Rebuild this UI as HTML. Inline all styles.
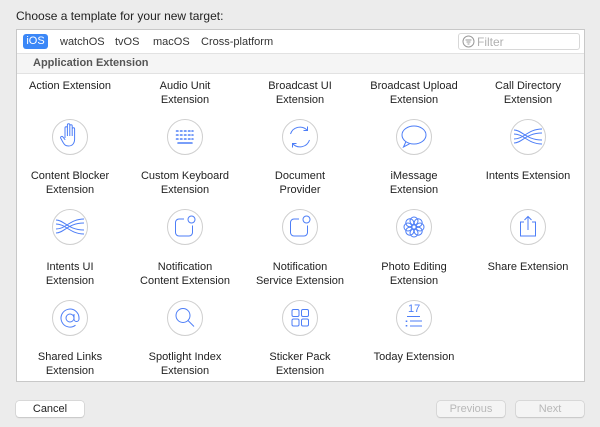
<!DOCTYPE html>
<html><head><meta charset="utf-8"><style>
*{margin:0;padding:0;box-sizing:border-box}
body{width:600px;height:427px;background:#ececec;font-family:"Liberation Sans",sans-serif;font-size:11px;color:#222;position:relative;overflow:hidden}
.a{position:absolute}
.box{left:16px;top:29px;width:569px;height:353px;background:#fff;border:1px solid #c8c8c8}
.lbl{position:absolute;width:114px;text-align:center;line-height:14px;font-size:11px;color:#222}
.btn{position:absolute;top:401px;height:16px;width:68px;background:#fff;border-radius:3px;box-shadow:0 0 0 0.5px #c4c4c4,0 1px 1px rgba(0,0,0,.15);text-align:center;line-height:16px;font-size:11px}
</style></head><body>
<div class="a" style="left:16px;top:9px;font-size:12px;color:#222">Choose a template for your new target:</div>
<div class="a box"></div>
<div class="a" style="left:17px;top:53px;width:567px;height:21px;background:#f5f5f5;border-top:1px solid #e2e2e2;border-bottom:1px solid #e2e2e2"></div>
<div class="a" style="left:23px;top:34px;width:25px;height:15px;background:#3b87f7;border-radius:3px;color:#fff;text-align:center;line-height:15px">iOS</div>
<div class="a" style="left:60px;top:36px;color:#333">watchOS</div>
<div class="a" style="left:115px;top:36px;color:#333">tvOS</div>
<div class="a" style="left:153px;top:36px;color:#333">macOS</div>
<div class="a" style="left:201px;top:36px;color:#333">Cross-platform</div>
<div class="a" style="left:458px;top:33px;width:122px;height:17px;border:1px solid #d8d8d8;border-radius:3px;background:#fff"></div>
<svg class="a" style="left:462px;top:35px" width="13" height="13" viewBox="0 0 13 13"><circle cx="6.5" cy="6.5" r="5.5" fill="none" stroke="#999"/><path d="M3.5 5h6M4.5 7h4M5.5 9h2" stroke="#999"/></svg>
<div class="a" style="left:477px;top:35px;color:#b0b0b0;font-size:12px">Filter</div>
<div class="a" style="left:33px;top:57px;font-weight:bold;color:#555">Application Extension</div>

<div class="lbl" style="left:13px;top:79px">Action Extension</div>
<div class="lbl" style="left:128px;top:79px">Audio Unit<br>Extension</div>
<div class="lbl" style="left:243px;top:79px">Broadcast UI<br>Extension</div>
<div class="lbl" style="left:357px;top:79px">Broadcast Upload<br>Extension</div>
<div class="lbl" style="left:471px;top:79px">Call Directory<br>Extension</div>

<div class="lbl" style="left:13px;top:169px">Content Blocker<br>Extension</div>
<div class="lbl" style="left:128px;top:169px">Custom Keyboard<br>Extension</div>
<div class="lbl" style="left:243px;top:169px">Document<br>Provider</div>
<div class="lbl" style="left:357px;top:169px">iMessage<br>Extension</div>
<div class="lbl" style="left:471px;top:169px">Intents Extension</div>

<div class="lbl" style="left:13px;top:260px">Intents UI<br>Extension</div>
<div class="lbl" style="left:128px;top:260px">Notification<br>Content Extension</div>
<div class="lbl" style="left:243px;top:260px">Notification<br>Service Extension</div>
<div class="lbl" style="left:357px;top:260px">Photo Editing<br>Extension</div>
<div class="lbl" style="left:471px;top:260px">Share Extension</div>

<div class="lbl" style="left:13px;top:350px">Shared Links<br>Extension</div>
<div class="lbl" style="left:128px;top:350px">Spotlight Index<br>Extension</div>
<div class="lbl" style="left:243px;top:350px">Sticker Pack<br>Extension</div>
<div class="lbl" style="left:357px;top:350px">Today Extension</div>

<svg class="a" style="left:0;top:0" width="600" height="427" fill="none" stroke="#4d7ef7" stroke-width="1">
<g stroke="#cfcfcf">
<circle cx="70" cy="137" r="17.5"/><circle cx="185" cy="137" r="17.5"/><circle cx="300" cy="137" r="17.5"/><circle cx="414" cy="137" r="17.5"/><circle cx="528" cy="137" r="17.5"/>
<circle cx="70" cy="227" r="17.5"/><circle cx="185" cy="227" r="17.5"/><circle cx="300" cy="227" r="17.5"/><circle cx="414" cy="227" r="17.5"/><circle cx="528" cy="227" r="17.5"/>
<circle cx="70" cy="318" r="17.5"/><circle cx="185" cy="318" r="17.5"/><circle cx="300" cy="318" r="17.5"/><circle cx="414" cy="318" r="17.5"/>
</g>
<!-- hand -->
<path d="M65 138v-10a1.2 1.2 0 0 1 2.4 0v8M67.4 136v-11a1.2 1.2 0 0 1 2.4 0v11M69.8 136v-10a1.2 1.2 0 0 1 2.4 0v10M72.2 136v-7a1.2 1.2 0 0 1 2.4 0v10c0 4-2 7-6 7c-3 0-4-1-5.5-3.5l-2.5-4.5a1.3 1.3 0 0 1 2.2-1.2l2.4 3"/>
<!-- keyboard -->
<g stroke-width="1.6" stroke-linecap="round"><path d="M176.5 131h1.5M180.5 131h1.5M184.5 131h1.5M188.5 131h1.5M192 131h1M176.5 135h1.5M180.5 135h1.5M184.5 135h1.5M188.5 135h1.5M192 135h1M176.5 139h1.5M180.5 139h1.5M184.5 139h1.5M188.5 139h1.5M192 139h1M178 143h14"/></g>
<!-- refresh -->
<path d="M290.5 134a10 10 0 0 1 17-3.5M309.5 140a10 10 0 0 1-17 3.5"/><path d="M307.5 126.5v4h-4M292.5 147.5v-4h4"/>
<!-- message -->
<ellipse cx="414" cy="135" rx="12" ry="9"/><path d="M406 141.5l-2.5 5.5 6-3.2"/>
<!-- intents waves -->
<g id="w"><path d="M514 130c8 0 12 10 28 10M514 143c8 0 12-10 28-10M514 134c10 0 14 10 28 10M514 139c10 0 14-10 28-10"/></g>
<path d="M56 220c8 0 12 10 28 10M56 233c8 0 12-10 28-10M56 224c10 0 14 10 28 10M56 229c10 0 14-10 28-10"/>
<!-- notification -->
<path d="M184 219h-5a3.5 3.5 0 0 0-3.5 3.5v10a3.5 3.5 0 0 0 3.5 3.5h10a3.5 3.5 0 0 0 3.5-3.5v-7"/><circle cx="191.5" cy="219.5" r="3.5"/>
<path d="M299 219h-5a3.5 3.5 0 0 0-3.5 3.5v10a3.5 3.5 0 0 0 3.5 3.5h10a3.5 3.5 0 0 0 3.5-3.5v-7"/><circle cx="306.5" cy="219.5" r="3.5"/>
<!-- flower -->
<g><circle cx="414" cy="221" r="4"/><circle cx="414" cy="233" r="4"/><circle cx="408" cy="227" r="4"/><circle cx="420" cy="227" r="4"/><circle cx="409.8" cy="222.8" r="4"/><circle cx="418.2" cy="222.8" r="4"/><circle cx="409.8" cy="231.2" r="4"/><circle cx="418.2" cy="231.2" r="4"/></g>
<!-- share -->
<path d="M524 222h-3.5v14h15v-14h-3.5M528 230v-13M524.5 220l3.5-3.5 3.5 3.5"/>
<!-- @ -->
<circle cx="70" cy="318" r="4"/><path d="M74 314v5a2.5 2.5 0 0 0 5 0v-1a9 9 0 1 0-3.5 7.2"/>
<!-- search -->
<circle cx="183" cy="315.5" r="7"/><path d="M188 320.5l6 6"/>
<!-- sticker grid -->
<rect x="292" y="309.5" width="7" height="7" rx="1.5"/><rect x="301.5" y="309.5" width="7" height="7" rx="1.5"/><rect x="292" y="319" width="7" height="7" rx="1.5"/><rect x="301.5" y="319" width="7" height="7" rx="1.5"/>
<!-- today -->
<path d="M407 316.5h13M410 321h12M410 326h12"/><path d="M406.5 320.5v1.5M406.5 325v1.5" stroke-width="1.6"/>
</svg>
<div class="a" style="left:408px;top:303px;font-size:11px;color:#4d7ef7">17</div>

<div class="btn" style="left:16px">Cancel</div>
<div class="btn" style="left:437px;color:#b8b8b8;background:#f4f4f4">Previous</div>
<div class="btn" style="left:516px;color:#b8b8b8;background:#f4f4f4">Next</div>
</body></html>
